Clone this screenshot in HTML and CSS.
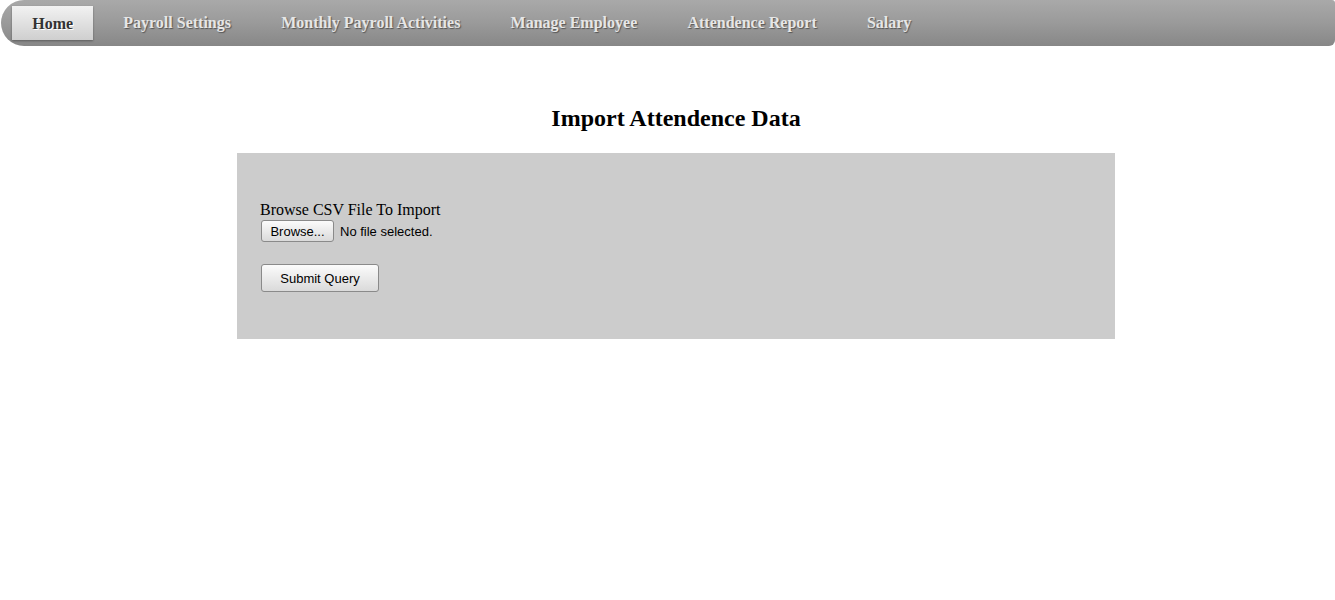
FILE: index.html
```html
<!DOCTYPE html>
<html>
<head>
<meta charset="utf-8">
<title>Import Attendence Data</title>
<link rel="stylesheet" href="styles.css">
</head>
<body>
<nav class="menu">
  <ul class="menu-list">
    <li><a class="menu-link active" href="#">Home</a></li>
    <li><a class="menu-link" href="#">Payroll Settings</a></li>
    <li><a class="menu-link" href="#">Monthly Payroll Activities</a></li>
    <li><a class="menu-link" href="#">Manage Employee</a></li>
    <li><a class="menu-link" href="#">Attendence Report</a></li>
    <li><a class="menu-link" href="#">Salary</a></li>
  </ul>
</nav>
<main class="content">
  <h2 class="title">Import Attendence Data</h2>
  <form class="panel">
    <div class="label">Browse CSV File To Import</div>
    <div class="file-row">
      <button type="button" class="btn btn-browse">Browse...</button>
      <span class="file-status">No file selected.</span>
    </div>
    <button type="button" class="btn btn-submit">Submit Query</button>
  </form>
</main>
</body>
</html>
```
FILE: styles.css
```css
html, body {
  margin: 0;
  padding: 0;
  background: #ffffff;
  font-family: "Liberation Serif", "Times New Roman", serif;
}
.menu {
  margin-left: 1px;
  height: 46px;
  background: linear-gradient(to bottom, #a9a9a9 0%, #9a9a9a 50%, #878787 100%);
  border-radius: 23px 3px 6px 23px;
  box-sizing: border-box;
}
.menu-list {
  list-style: none;
  margin: 0;
  padding: 6px 0 0 6px;
  display: flex;
}
.menu-list li {
  margin: 0 5px 0 5.2px;
}
.menu-link {
  display: block;
  height: 34px;
  line-height: 34px;
  padding: 0 20px;
  font-size: 16px;
  font-weight: bold;
  color: #e6e6e6;
  text-decoration: none;
  text-shadow: 1px 1px 1px #555555;
  box-sizing: border-box;
}
.menu-link.active {
  background: linear-gradient(to bottom, #f2f2f2 0%, #dddddd 60%, #cfcfcf 100%);
  color: #333333;
  text-shadow: 1px 1px 0 #ffffff;
  box-shadow: 0 1px 2px rgba(0,0,0,0.35);
  padding-top: 1px;
}
.content {
  margin-left: 17px;
  padding-top: 58px;
}
.title {
  margin: 0;
  text-align: center;
  font-size: 24px;
  line-height: 28px;
  font-weight: bold;
  color: #000000;
}
.panel {
  width: 878px;
  height: 186px;
  margin: 21px auto 0;
  background: #cccccc;
  padding: 46px 24px 0;
  box-sizing: border-box;
}
.label {
  font-size: 16px;
  line-height: 21px;
  height: 21px;
  box-sizing: border-box;
  color: #000;
  margin-left: -1px;
}
.file-row {
  display: flex;
  align-items: center;
}
.btn {
  font-family: "Liberation Sans", Arial, sans-serif;
  font-size: 13px;
  color: #000;
  background: linear-gradient(to bottom, #fbfbfb 0%, #e9e9e9 55%, #dadada 100%);
  border: 1px solid #8a8a8a;
  border-radius: 3px;
  padding: 0;
  box-sizing: border-box;
}
.btn-browse {
  width: 73px;
  height: 22px;
}
.file-status {
  margin-left: 6px;
  font-family: "Liberation Sans", Arial, sans-serif;
  font-size: 13px;
  color: #000;
}
.btn-submit {
  display: block;
  width: 118px;
  height: 28px;
  margin-top: 22px;
}
```
